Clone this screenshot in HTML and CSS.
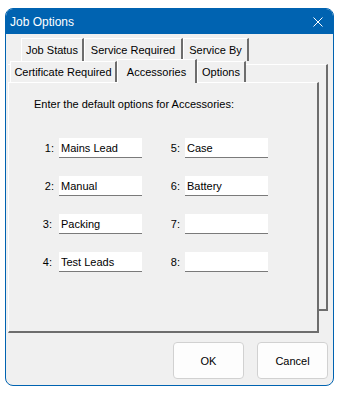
FILE: index.html
```html
<!DOCTYPE html>
<html>
  <head>
    <title>Job Options</title>
    <link rel="stylesheet" href="styles.css">
  </head>
  <body>
    <div class="window">
      <div class="titlebar">
        <span class="title">Job Options</span>
        <svg class="close" width="10" height="10" viewBox="0 0 10 10">
          <path d="M0.5 0.5L9.5 9.5M9.5 0.5L0.5 9.5" stroke="#ffffff" stroke-width="1" fill="none" />
        </svg>
      </div>
      <div class="client">
        <div class="tabs">
          <div class="tabrow row1">
            <div class="tab tab-status">Job Status</div>
            <div class="tab tab-required">Service Required</div>
            <div class="tab tab-by">Service By</div>
          </div>
          <div class="back">
            <div class="tabrow row2">
              <div class="tab tab-cert">Certificate Required</div>
              <div class="tab tab-acc active">Accessories</div>
              <div class="tab tab-opt">Options</div>
            </div>
            <div class="page">
              <p class="intro">Enter the default options for Accessories:</p>
              <div class="fields">
                <label class="field"><span class="num">1:</span><input type="text" value="Mains Lead" /></label>
                <label class="field"><span class="num">5:</span><input type="text" value="Case" /></label>
                <label class="field"><span class="num">2:</span><input type="text" value="Manual" /></label>
                <label class="field"><span class="num">6:</span><input type="text" value="Battery" /></label>
                <label class="field nudge"><span class="num">3:</span><input type="text" value="Packing" /></label>
                <label class="field"><span class="num">7:</span><input type="text" value="" /></label>
                <label class="field nudge"><span class="num">4:</span><input type="text" value="Test Leads" /></label>
                <label class="field"><span class="num">8:</span><input type="text" value="" /></label>
              </div>
            </div>
          </div>
        </div>
        <div class="buttons">
          <button class="btn">OK</button>
          <button class="btn">Cancel</button>
        </div>
      </div>
    </div>
  </body>
</html>
```

FILE: styles.css
```css
body {
  margin: 0;
  background-color: #ffffff;
  font-family: "Liberation Sans", Arial, sans-serif;
}
.window {
  margin: 8px 0 0 5px;
  width: 329px;
  height: 378px;
  box-sizing: border-box;
  border: 1px solid #0063b1;
  border-radius: 8px;
  background-color: #f0f0f0;
  overflow: hidden;
  display: flex;
  flex-direction: column;
}
.titlebar {
  flex: none;
  height: 25px;
  background-color: #0063b1;
  color: #ffffff;
  font-size: 12px;
  display: flex;
  align-items: center;
  justify-content: space-between;
  padding: 0 10px 0 4px;
}
.close {
  display: block;
}
.client {
  flex: 1;
  padding-top: 4px;
}
.tabs {
  margin: 0 5px 0 2px;
  font-size: 11px;
  color: #000000;
}
.tabrow {
  display: flex;
}
.row1 {
  margin-left: 13px;
  height: 23px;
}
.row2 {
  margin-top: -4px;
  margin-left: 2px;
  height: 21px;
  align-items: flex-end;
}
.tab {
  box-sizing: border-box;
  border-top: 1px solid #ffffff;
  border-left: 1px solid #ffffff;
  border-right: 2px solid #6d6d6d;
  background-color: #f0f0f0;
  display: flex;
  align-items: center;
  justify-content: center;
  white-space: nowrap;
}
.row1 .tab {
  height: 23px;
}
.row2 .tab {
  height: 21px;
}
.row2 .active {
  height: 24px;
  margin-bottom: -1px;
  position: relative;
  z-index: 1;
}
.tab-status { width: 63px; }
.tab-required { width: 99px; }
.tab-by { width: 66px; }
.tab-cert { width: 107px; }
.tab-acc { width: 80px; }
.tab-opt { width: 49px; }
.back {
  margin-top: 3px;
  border-top: 1px solid #ffffff;
  border-right: 2px solid #6d6d6d;
  border-bottom: 2px solid #6d6d6d;
}
.page {
  box-sizing: border-box;
  height: 251px;
  margin: 0 7px -24px 0;
  border-top: 1px solid #ffffff;
  border-left: 1px solid #ffffff;
  border-right: 2px solid #6d6d6d;
  border-bottom: 2px solid #6d6d6d;
  background-color: #f0f0f0;
  padding: 14px 0 0 25px;
}
.intro {
  margin: 0;
  line-height: 14px;
}
.fields {
  margin: 27px 0 0 4px;
  display: grid;
  grid-template-columns: 104px 104px;
  column-gap: 22px;
  row-gap: 18px;
}
.field {
  display: flex;
  align-items: center;
  gap: 5px;
}
.num {
  width: 16px;
  text-align: right;
}
.field input {
  width: 83px;
  height: 20px;
  box-sizing: border-box;
  margin: 0;
  border: none;
  border-bottom: 1px solid #7a7a7a;
  padding: 0 2px;
  font: inherit;
  color: #000000;
  background-color: #ffffff;
  outline: none;
}
.nudge input {
  margin-left: 2px;
}
.buttons {
  display: flex;
  justify-content: flex-end;
  gap: 13px;
  margin: 31px 5px 0 0;
}
.btn {
  width: 71px;
  height: 37px;
  border: 1px solid #d1d1d1;
  border-radius: 4px;
  background-color: #fdfdfd;
  font-family: "Liberation Sans", Arial, sans-serif;
  font-size: 11px;
  color: #000000;
  padding: 0;
}
```
